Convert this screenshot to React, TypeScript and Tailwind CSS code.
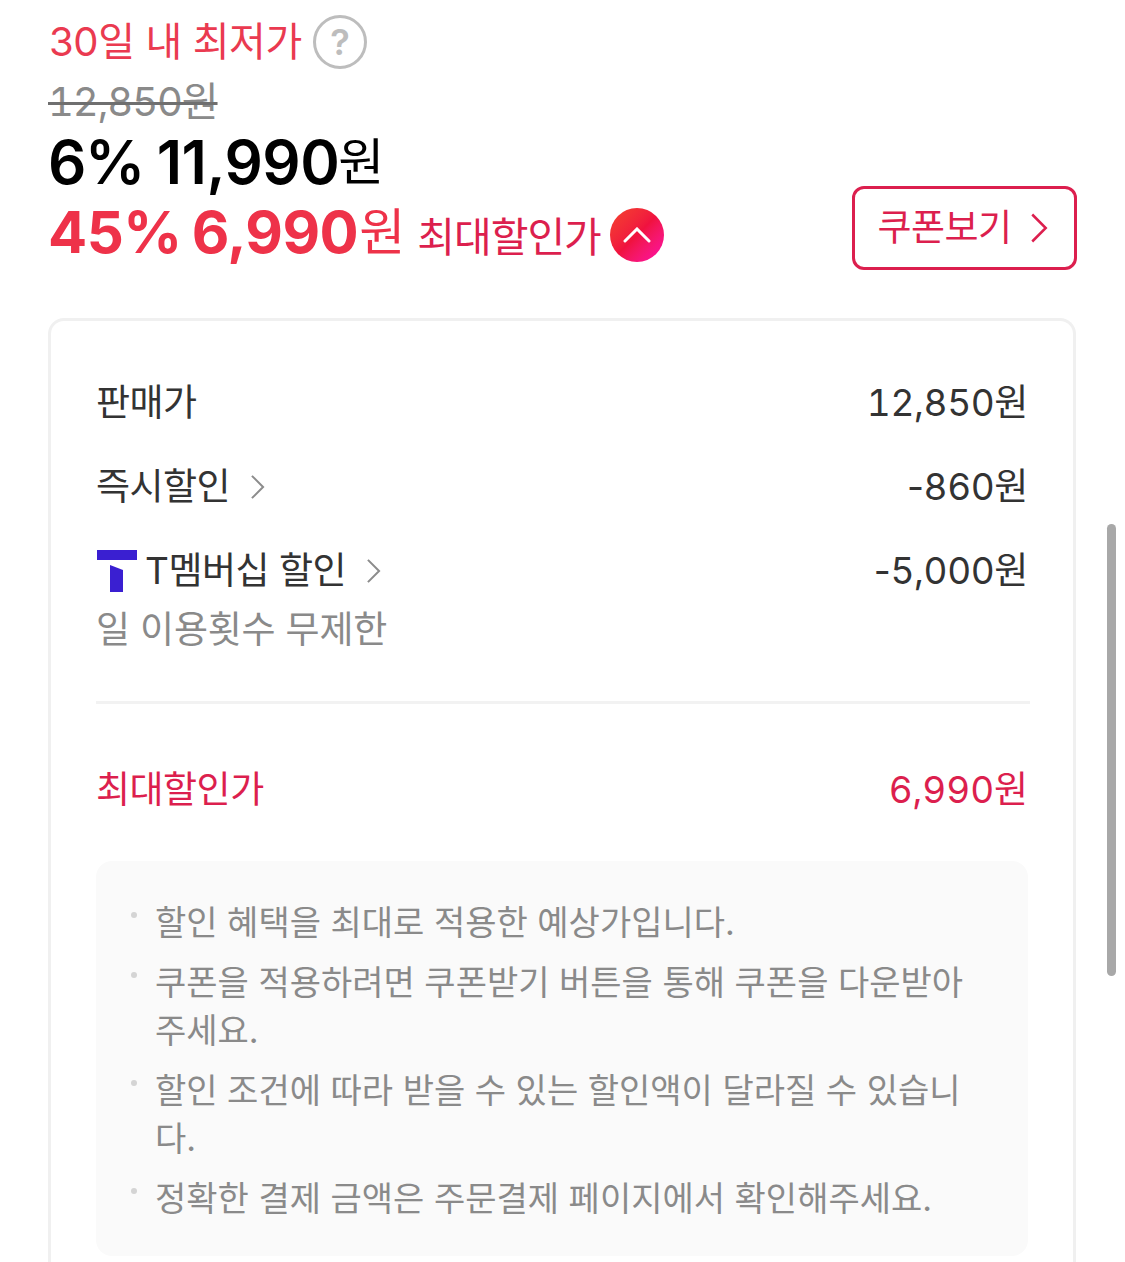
const Chevron = ({ className }: { className: string }) => (
  <svg viewBox="0 0 16 28" fill="none" stroke="currentColor" strokeWidth="2.2" className={className}>
    <path d="M2 2l12 12L2 26" />
  </svg>
);

const Row = ({ label, value, arrow }: { label: React.ReactNode; value: string; arrow?: boolean }) => (
  <div className="flex items-center justify-between h-[84px] text-[37px] tracking-[-0.5px] text-[#333]">
    <div className="flex items-center">
      {label}
      {arrow && <Chevron className="w-[15px] h-[26px] ml-[20px] text-[#8c8c8c]" />}
    </div>
    <span className="tabular-nums tracking-[-0.4px]">
      {value.startsWith("-") && <span className="normal-nums">-</span>}
      {value.replace("-", "")}
    </span>
  </div>
);

const Note = ({ children }: { children: React.ReactNode }) => (
  <li className="relative pl-[59px] pr-[50px] mb-[12px] break-all">
    <span className="absolute left-[35px] top-[13px] w-[6px] h-[6px] rounded-full bg-[#d4d4d4]"></span>
    {children}
  </li>
);

export default function App() {
  return (
    <div className="relative w-[1125px] h-[1262px] overflow-hidden bg-white pl-[48px] pr-[49px] pt-[12px] font-['Inter','Noto_Sans_CJK_KR',sans-serif]">
      {/* 가격 영역 */}
      <div className="flex items-center h-[60px] text-[40px] tracking-[-0.4px] text-[#ea3a50]">
        <span className="ml-[1px]">30일 내 최저가</span>
        <span className="ml-[11px] w-[54px] h-[54px] rounded-full border-[3px] border-[#bdbdbd] flex items-center justify-center text-[36px] font-semibold text-[#bdbdbd]">?</span>
      </div>
      <div className="h-[60px] flex items-center text-[40px] tabular-nums tracking-[-1.1px] text-[#8a8a8a] line-through decoration-[#6f6f6f] decoration-[3px]">12,850원</div>
      <div className="h-[60px] flex items-center text-[60px] font-semibold text-black">
        <span className="tracking-[-1.5px]">6%</span>
        <span className="ml-[13px] tracking-[-0.5px]">11,990</span>
        <span className="ml-[-1px] text-[50px] font-normal">원</span>
      </div>
      <div className="flex items-start justify-between h-[126px]">
        <div className="flex items-center h-[80px] text-[#ee3249]">
          <span className="text-[58px] font-bold tracking-[-0.5px]">45%</span>
          <span className="ml-[10px] text-[58px] font-bold tracking-[-0.5px]">6,990</span>
          <span className="ml-[1px] text-[50px]">원</span>
          <span className="ml-[12px] mt-[12px] text-[41px] text-[#dc1f4e] tracking-[-1px]">최대할인가</span>
          <span className="ml-[9px] mt-[6px] w-[54px] h-[54px] rounded-full flex items-center justify-center bg-gradient-to-br from-[#f5402c] via-[#f0123f] to-[#ff00a8]">
            <svg viewBox="0 0 28 16" fill="none" stroke="white" strokeWidth="3" strokeLinecap="round" className="w-[28px] h-[16px]">
              <path d="M2 14L14 2l12 12" />
            </svg>
          </span>
        </div>
        <button className="mt-[-6px] ml-[1px] mr-[-1px] w-[225px] h-[84px] rounded-[12px] border-[3px] border-[#dc1f4e] flex items-center justify-center text-[37px] text-[#dc1f4e] tracking-[-0.5px]">
          쿠폰보기
          <Chevron className="w-[18px] h-[34px] ml-[18px] mr-[4px]" />
        </button>
      </div>

      {/* 할인 내역 카드 */}
      <div className="rounded-t-[16px] border-[3px] border-b-0 border-[#f0f0f0] px-[45px] pt-[40px] pb-[100px]">
        <Row label="판매가" value="12,850원" />
        <Row label="즉시할인" value="-860원" arrow />
        <Row
          label={
            <span className="flex items-center">
              <svg viewBox="0 0 40 42" className="ml-[1px] w-[40px] h-[42px] mr-[8px]">
                <path d="M0 0h40v10H0z" fill="#3a1fd1" />
                <path d="M13 15l13 5v22H13z" fill="#3a1fd1" />
              </svg>
              T멤버십 할인
            </span>
          }
          value="-5,000원"
          arrow
        />
        <div className="mt-[-13px] h-[60px] flex items-center text-[37px] tracking-[-0.2px] text-[#8a8a8a]">일 이용횟수 무제한</div>
        <div className="mt-[41px] mr-[-2px] h-[3px] bg-[#f2f2f2]"></div>
        <div className="mt-[44px] h-[84px] flex items-center justify-between text-[37px] tracking-[-0.5px] text-[#dc1f4e]">
          <span>최대할인가</span>
          <span className="tabular-nums tracking-[-0.1px]">6,990원</span>
        </div>
        <ul className="mt-[29px] rounded-[16px] bg-[#fafafa] pt-[38px] pb-[21px] text-[34px] leading-[48px] tracking-[0px] text-[#8a8a8a]">
          <Note>할인 혜택을 최대로 적용한 예상가입니다.</Note>
          <Note>쿠폰을 적용하려면 쿠폰받기 버튼을 통해 쿠폰을 다운받아 주세요.</Note>
          <Note>할인 조건에 따라 받을 수 있는 할인액이 달라질 수 있습니다.</Note>
          <Note>정확한 결제 금액은 주문결제 페이지에서 확인해주세요.</Note>
        </ul>
      </div>

      {/* 스크롤바 */}
      <div className="absolute left-[1107px] top-[524px] w-[9px] h-[452px] rounded-full bg-[#a8a8a8]"></div>
    </div>
  );
}
